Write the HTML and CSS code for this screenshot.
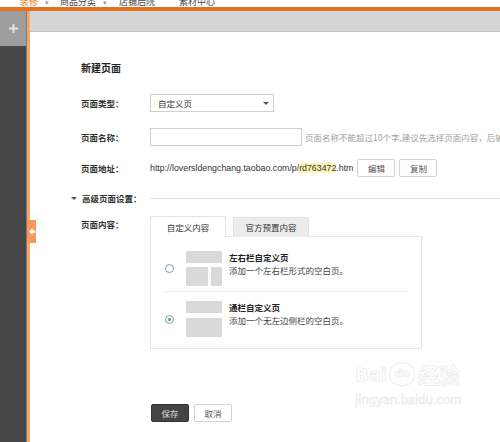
FILE: index.html
```html
<!DOCTYPE html>
<html lang="zh-CN">
<head>
  <meta charset="UTF-8">
  <title>新建页面</title>
  <link rel="stylesheet" href="styles.css">
</head>
<body>
  <div class="topnav">
    <div class="topnav-items">
      <span class="nav-item nav-decorate">装修<i class="caret">▾</i></span>
      <span class="nav-item nav-goods">商品分类<i class="caret">▾</i></span>
      <span class="nav-item nav-shop">店铺后院</span>
      <span class="nav-item nav-assets">素材中心</span>
    </div>
  </div>

  <div class="layout">
    <div class="sidebar">
      <div class="sidebar-add">
        <svg width="9" height="9" viewBox="0 0 9 9"><rect x="3.5" y="0" width="2" height="9" fill="#e4e4e4"/><rect x="0" y="3.5" width="9" height="2" fill="#e4e4e4"/></svg>
      </div>
    </div>
    <div class="divider">
      <span class="collapse-tab">
        <svg width="6" height="7" viewBox="0 0 6 7"><path d="M0 3.5 L3.5 0 V2 H6 V5 H3.5 V7 Z" fill="#fff"/></svg>
      </span>
    </div>

    <div class="main">
      <div class="toolbar"></div>

      <div class="form">
        <h3 class="form-title">新建页面</h3>

        <!-- 基本信息 -->
        <div class="row row-type">
          <label class="row-label">页面类型：</label>
          <div class="select">自定义页<span class="select-arrow"></span></div>
        </div>

        <div class="row row-name">
          <label class="row-label">页面名称：</label>
          <input type="text" class="text-input">
          <span class="hint">页面名称不能超过10个字,建议先选择页面内容，后输入页面名称</span>
        </div>

        <div class="row row-url">
          <label class="row-label">页面地址：</label>
          <span class="url">http://loversldengchang.taobao.com/p/<span class="url-mark">rd763472</span>.htm</span>
          <button class="btn">编辑</button>
          <button class="btn">复制</button>
        </div>

        <!-- 高级设置 -->
        <div class="row row-advanced">
          <span class="fold-arrow"></span>
          <label class="row-label">高级页面设置：</label>
          <span class="rule"></span>
        </div>

        <div class="row row-content">
          <label class="row-label">页面内容：</label>
          <div class="content-box">
            <div class="tabs">
              <span class="tab active">自定义内容</span>
              <span class="tab">官方预置内容</span>
            </div>
            <div class="panel">
              <div class="option option-first">
                <span class="radio"></span>
                <div class="thumb">
                  <div class="thumb-top"></div>
                  <div class="thumb-bottom">
                    <div class="thumb-main"></div>
                    <div class="thumb-side"></div>
                  </div>
                </div>
                <div class="option-text">
                  <div class="option-title">左右栏自定义页</div>
                  <div class="option-desc">添加一个左右栏形式的空白页。</div>
                </div>
              </div>
              <div class="option option-second">
                <span class="radio checked"></span>
                <div class="thumb thumb-wide">
                  <div class="thumb-top"></div>
                  <div class="thumb-bottom">
                    <div class="thumb-main"></div>
                  </div>
                </div>
                <div class="option-text">
                  <div class="option-title">通栏自定义页</div>
                  <div class="option-desc">添加一个无左边侧栏的空白页。</div>
                </div>
              </div>
            </div>
          </div>
        </div>

        <div class="actions">
          <button class="btn btn-primary">保存</button>
          <button class="btn">取消</button>
        </div>
      </div>

      <div class="watermark">
        <div class="wm-logo"><span class="wm-bai">Bai</span><span class="wm-paw">du</span><span class="wm-jy">经验</span></div>
        <div class="wm-url">jingyan.baidu.com</div>
      </div>
    </div>
  </div>
</body>
</html>
```

FILE: styles.css
```css
body {
  margin: 0;
  overflow: hidden;
  font-family: "Noto Sans CJK SC", sans-serif;
  font-size: 8.5px;
  color: #333;
  background: #fff;
}
.topnav {
  height: 7px;
  overflow: hidden;
  border-bottom: 4px solid #e4731f;
}
.topnav-items {
  display: flex;
  margin-top: -3px;
  font-size: 9px;
  line-height: 9px;
  color: #444;
  white-space: nowrap;
}
.nav-item .caret {
  font-style: normal;
  font-size: 7px;
  color: #999;
  margin-left: 7px;
}
.nav-decorate {
  margin-left: 20px;
  color: #f06c0a;
}
.nav-goods {
  margin-left: 11px;
}
.nav-shop {
  margin-left: 12px;
}
.nav-assets {
  margin-left: 24px;
}
.layout {
  display: flex;
  height: 431px;
}
.sidebar {
  flex-shrink: 0;
  width: 26px;
  background: #474747;
  border-right: 1px solid #7a7a7a;
}
.sidebar-add {
  height: 35px;
  background: #9d9d9d;
  display: flex;
  align-items: center;
  justify-content: center;
}
.divider {
  flex-shrink: 0;
  position: relative;
  width: 3px;
  background: #f8a46e;
}
.collapse-tab {
  position: absolute;
  left: 0;
  top: 209px;
  width: 9px;
  height: 23px;
  background: #f8995a;
  display: flex;
  align-items: center;
  justify-content: center;
}
.main {
  position: relative;
  flex: 1;
  min-width: 0;
  overflow: hidden;
}
.toolbar {
  height: 20px;
  background: #d5d5d5;
  border-bottom: 1px solid #c2c2c2;
}
.form {
  padding: 29px 0 0 51px;
}
.form-title {
  margin: 0;
  font-size: 10px;
  line-height: 14px;
  font-weight: bold;
  color: #222;
}
.row {
  display: flex;
  align-items: center;
  white-space: nowrap;
}
.row-label {
  width: 69px;
  flex-shrink: 0;
  font-weight: bold;
  color: #333;
}
.row-type {
  margin-top: 19px;
}
.select {
  position: relative;
  width: 115px;
  height: 16px;
  line-height: 16px;
  padding-left: 7px;
  border: 1px solid #cfcfcf;
  color: #333;
}
.select-arrow {
  position: absolute;
  right: 4px;
  top: 7px;
  border-left: 3px solid transparent;
  border-right: 3px solid transparent;
  border-top: 3px solid #555;
}
.row-name {
  margin-top: 16px;
}
.text-input {
  flex-shrink: 0;
  width: 150px;
  height: 16px;
  padding: 0;
  margin: 0;
  border: 1px solid #cfcfcf;
  box-sizing: content-box;
}
.hint {
  margin-left: 3px;
  color: #a0a0a0;
}
.row-url {
  margin-top: 13px;
}
.url {
  font-family: "Liberation Sans", sans-serif;
  font-size: 8.8px;
  color: #333;
}
.url-mark {
  background: #fbf6b4;
}
.btn {
  flex-shrink: 0;
  width: 38px;
  height: 18px;
  padding: 0;
  margin-left: 4px;
  font-family: "Noto Sans CJK SC", sans-serif;
  font-size: 8.5px;
  color: #555;
  background: #fff;
  border: 1px solid #d2d2d2;
  border-radius: 2px;
}
.row-advanced {
  margin-top: 14px;
  height: 14px;
}
.fold-arrow {
  margin-left: -10px;
  margin-right: 5px;
  border-left: 3px solid transparent;
  border-right: 3px solid transparent;
  border-top: 3px solid #555;
}
.row-advanced .row-label {
  width: 68px;
}
.rule {
  flex: 1;
  height: 1px;
  background: #ddd;
}
.row-content {
  margin-top: 11px;
  align-items: flex-start;
}
.row-content .row-label {
  padding-top: 1px;
  line-height: 14px;
}
.tabs {
  display: flex;
  align-items: flex-end;
  height: 21px;
  margin-bottom: -1px;
}
.tab {
  width: 74px;
  height: 19px;
  line-height: 19px;
  text-align: center;
  background: #ececec;
  border: 1px solid #e2e2e2;
  border-bottom: none;
  margin-left: 7px;
}
.tab.active {
  height: 20px;
  line-height: 20px;
  background: #fff;
  border-color: #e4e4e4;
  margin-left: 0;
  position: relative;
  z-index: 1;
}
.panel {
  width: 242px;
  padding: 0 14px;
  border: 1px solid #e4e4e4;
}
.option {
  display: flex;
  align-items: center;
}
.option-first {
  padding: 14px 0 5px;
}
.option-second {
  padding: 9px 0 11px;
  border-top: 1px solid #ececec;
}
.radio {
  flex-shrink: 0;
  width: 7px;
  height: 7px;
  border: 1px solid #7b98be;
  border-radius: 50%;
  background: #fff;
  position: relative;
  margin-right: 12px;
}
.radio.checked::after {
  content: "";
  position: absolute;
  left: 2px;
  top: 2px;
  width: 3px;
  height: 3px;
  border-radius: 50%;
  background: #3bb53b;
}
.thumb {
  flex-shrink: 0;
  width: 36px;
  align-self: flex-start;
}
.thumb-top {
  height: 12px;
  background: #d9d9d9;
}
.thumb-bottom {
  display: flex;
  margin-top: 4px;
  height: 19px;
}
.thumb-wide .thumb-bottom {
  margin-top: 5px;
}
.thumb-main {
  flex: 1;
  background: #d9d9d9;
}
.thumb-side {
  width: 11px;
  margin-left: 3px;
  background: #d9d9d9;
}
.option-text {
  align-self: flex-start;
  margin-left: 7px;
  line-height: 13px;
}
.option-title {
  font-weight: bold;
  color: #222;
}
.option-desc {
  color: #444;
}
.actions {
  display: flex;
  margin-top: 55px;
  padding-left: 70px;
}
.actions .btn {
  margin-left: 0;
  margin-right: 5px;
}
.btn-primary {
  background: #444;
  border-color: #333;
  color: #ddd;
}
.watermark {
  position: absolute;
  left: 325px;
  top: 345px;
  color: #fff;
  -webkit-text-stroke: 0.6px #e8e8e8;
  font-family: "DejaVu Sans", sans-serif;
}
.wm-logo {
  display: flex;
  align-items: center;
  height: 36px;
}
.wm-bai {
  font-size: 18px;
  font-weight: bold;
}
.wm-paw {
  width: 24px;
  height: 22px;
  margin: 0 3px 0 2px;
  border: 1px solid #ececec;
  border-radius: 50% 50% 45% 45%;
  font-size: 11px;
  font-weight: bold;
  text-align: center;
  line-height: 22px;
}
.wm-jy {
  font-family: "Noto Sans CJK SC", sans-serif;
  font-size: 21px;
  font-weight: bold;
}
.wm-url {
  font-size: 11.5px;
  margin-top: 1px;
}
```
